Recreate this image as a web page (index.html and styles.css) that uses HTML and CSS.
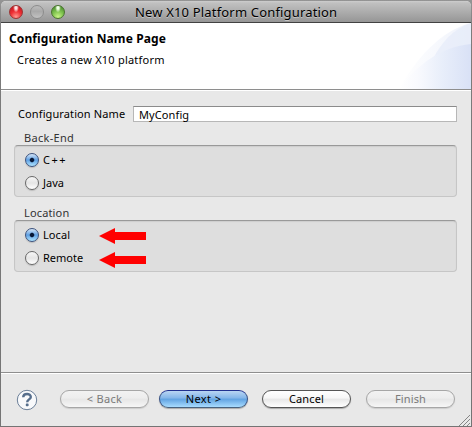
FILE: index.html
```html
<!DOCTYPE html>
<html lang="en">
<head>
<meta charset="utf-8">
<title>New X10 Platform Configuration</title>
<link rel="stylesheet" href="styles.css">
</head>
<body>
<main class="window">
  <header class="titlebar">
    <div class="lights">
      <i class="light red"></i><i class="light gray"></i><i class="light green"></i>
    </div>
    <h1 class="title">New X10 Platform Configuration</h1>
  </header>
  <section class="banner">
    <div class="banner-text">
      <h2>Configuration Name Page</h2>
      <p>Creates a new X10 platform</p>
    </div>
    <svg class="swoosh" width="76" height="66" viewBox="0 0 76 66">
      <defs>
        <linearGradient id="fade" x1="0" x2="1"><stop offset="0" stop-color="#fff"/><stop offset="1" stop-color="#e4eaf8"/></linearGradient>
        <linearGradient id="deep" x1="0" x2="1"><stop offset="0" stop-color="#fff"/><stop offset=".25" stop-color="#f9fafe"/><stop offset=".6" stop-color="#e8eefa"/><stop offset="1" stop-color="#d9e1f6"/></linearGradient>
      </defs>
      <path d="M4 66C20 37 46 7 76 0V66Z" fill="url(#fade)" opacity=".6"/>
      <path d="M38 36C46 20 58 6 76 0V40Z" fill="#e3eaf8" opacity=".6"/>
      <path d="M4 66C24 40 46 24 76 21V66Z" fill="url(#deep)"/>
    </svg>
  </section>
  <section class="content">
    <label class="field"><span class="field-label">Configuration Name</span><span class="input"><span class="value">MyConfig</span></span></label>
    <h3 class="group-title backend">Back-End</h3>
    <div class="group">
      <div class="option"><i class="radio on"></i><span class="cpp">C++</span></div>
      <div class="option"><i class="radio"></i><span class="java">Java</span></div>
    </div>
    <h3 class="group-title location">Location</h3>
    <div class="group">
      <div class="option"><i class="radio on"></i><span class="local">Local</span>
        <svg class="arrow" width="47" height="16" viewBox="0 0 47 16"><path d="M0 8L16 0V4H47V12H16V16Z" fill="#f00"/></svg></div>
      <div class="option"><i class="radio"></i><span class="remote">Remote</span>
        <svg class="arrow low" width="47" height="16" viewBox="0 0 47 16"><path d="M0 8L16 0V4H47V12H16V16Z" fill="#f00"/></svg></div>
    </div>
  </section>
  <footer class="footer">
    <svg class="help" width="22" height="22" viewBox="0 0 22 22">
      <circle cx="11" cy="11" r="9.7" fill="#f8f9fb" stroke="#6b7f98" stroke-width="1"/>
      <path d="M7.2 8.2C7.4 3.8 14.8 4 14.8 7.9C14.8 10.4 11.2 10.4 11.2 13.2" fill="none" stroke="#566e8c" stroke-width="2.4"/>
      <rect x="9.8" y="14.6" width="2.8" height="2.6" rx=".8" fill="#566e8c"/>
    </svg>
    <div class="button disabled"><span class="t-back">&lt; Back</span></div>
    <div class="button primary"><span class="t-next">Next &gt;</span></div>
    <div class="button cancel"><span class="t-cancel">Cancel</span></div>
    <div class="button disabled"><span class="t-finish">Finish</span></div>
    <svg class="grip" width="11" height="11" viewBox="0 0 11 11"><path d="M0 11L11 0M4 11L11 4M8 11L11 8" stroke="#858585" fill="none"/></svg>
  </footer>
</main>
</body>
</html>
```
FILE: styles.css
```css
* { box-sizing: border-box; }
body {
  margin: 0;
  width: 472px;
  height: 427px;
  overflow: hidden;
  background: linear-gradient(#949494, #7c7c7c 30px, #747474);
  padding: 1px;
  font: 11px/16px "Noto Sans", "Open Sans", sans-serif;
  color: #000;
}
h1, h2, h3, p { margin: 0; font-weight: 400; }
.window {
  width: 470px;
  height: 425px;
  display: flex;
  flex-direction: column;
  background: #e8e8e8;
  border-radius: 5px 5px 0 0;
  overflow: hidden;
}
.titlebar {
  height: 22px;
  flex: none;
  display: flex;
  background: linear-gradient(#cdcdcd, #c0c0c0 10%, #969696);
  border-bottom: 1px solid #424242;
}
.lights { display: flex; gap: 7px; padding: 4px 0 0 8px; width: 134px; }
.light {
  width: 14px;
  height: 14px;
  border-radius: 50%;
  border: 1px solid #7c7c7c;
}
.light.red { border-color: #9b3434; background: radial-gradient(ellipse at 50% 12%, #ffe4e4 0 12%, transparent 34%), radial-gradient(circle at 50% 90%, #ff9b91, #ee3035 45%, #b80e18); }
.light.gray { border-color: #8c8c8c; background: linear-gradient(#bcbcbc, #a9a9a9 45%, #c2c2c2); }
.light.green { border-color: #4a742f; background: radial-gradient(ellipse at 50% 12%, #eeffe4 0 12%, transparent 34%), radial-gradient(circle at 50% 90%, #c9f586, #80c450 45%, #3c7c25); }
.title { font-size: 13px; line-height: 22px; letter-spacing: .17px; white-space: nowrap; text-shadow: 0 1px 0 #c6c6c6; }
.banner {
  height: 68px;
  flex: none;
  display: flex;
  justify-content: space-between;
  background: #fff;
  border-bottom: 1px solid #fff;
  box-shadow: inset 0 -1px #8e8e8e;
}
.banner-text { padding: 8px 0 0 8px; white-space: nowrap; }
.banner h2 { font-size: 12px; font-weight: 700; letter-spacing: .11px; }
.banner p { padding: 5px 0 0 8px; letter-spacing: .21px; }
.content { height: 281px; flex: none; padding: 15px 14px 0 13px; }
.field { display: flex; height: 16px; }
.field-label { width: 119px; padding-left: 4px; letter-spacing: .11px; line-height: 15px; white-space: nowrap; }
.input {
  flex: none;
  width: 324px;
  border: 1px solid #b7b7b7;
  border-top-color: #8b8b8b;
  background: #fff;
  padding-left: 5px;
  line-height: 15px;
  letter-spacing: .1px;
}
.group-title { padding-left: 10px; height: 15px; margin-top: 8px; font-size: 11px; line-height: 16px; letter-spacing: .15px; color: #333; }
.group-title.backend { letter-spacing: .3px; }
.group {
  height: 52px;
  border: 1px solid #c6c6c6;
  border-top-color: #999;
  border-radius: 4px;
  background: #dedede;
  box-shadow: inset 0 1px 1px #cecece;
  padding: 2px 0 0 10px;
}
.option { display: flex; height: 23px; align-items: center; white-space: nowrap; }
.option > span { width: 60px; padding-left: 4px; }
.option > .cpp { letter-spacing: 1.5px; }
.option > .local { letter-spacing: .1px; }
.radio {
  width: 14px;
  height: 14px;
  flex: none;
  border-radius: 50%;
  border: 1px solid #696969;
  background: linear-gradient(#f7f7f7, #e5e5e5 50%, #fff);
  box-shadow: 0 1px 1px #bbb;
}
.radio.on {
  border-color: #3c527d;
  background: radial-gradient(circle, #071837 0 1.6px, transparent 2.8px), linear-gradient(#d6e6f8, #5fa0e3 50%, #afe4ff);
}
.arrow { margin-top: 3px; flex: none; }
.arrow.low { margin-top: 5px; }
.footer {
  height: 55px;
  flex: none;
  display: flex;
  position: relative;
  border-top: 1px solid #8e8e8e;
  box-shadow: inset 0 1px #fff;
  padding: 17px 0 0 15px;
}
.help { margin: -1px 22px 0 0; }
.button {
  width: 89px;
  height: 18px;
  margin-right: 10px;
  border: 1px solid #555;
  border-radius: 9px;
  background: linear-gradient(#fff, #f6f6f6 45%, #e7e7e7 50%, #fff);
  box-shadow: 0 1px 1px #aaa;
  text-align: center;
  line-height: 16px;
  letter-spacing: .15px;
  white-space: nowrap;
}
.button.disabled { color: #7a7a7a; border-color: #a6a6a6; background: linear-gradient(#f2f2f2, #ededed 45%, #e6e6e6 50%, #f6f6f6); box-shadow: 0 1px 1px #ccc; }
.button.primary { margin-right: 14px; letter-spacing: .4px; border-color: #20318f #375184 #47627f; background: linear-gradient(#b9d5f3, #82b5e9 45%, #60a2e1 50%, #a8dcff); }
.button.cancel { margin-right: 15px; }
.t-back { letter-spacing: .3px; }
.grip { position: absolute; right: 1px; bottom: 1px; }
```
